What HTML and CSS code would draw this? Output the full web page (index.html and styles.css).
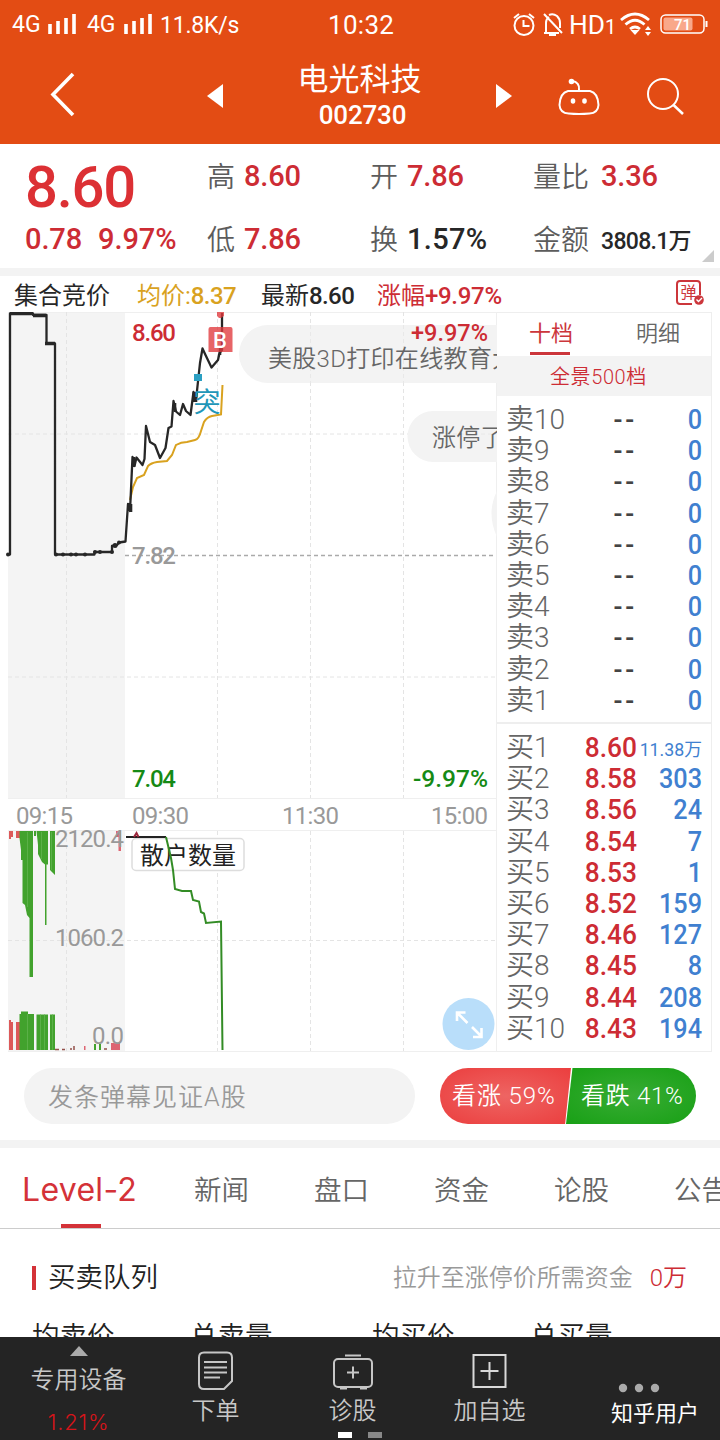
FILE: index.html
```html
<!DOCTYPE html>
<html lang="zh-CN">
<head>
<meta charset="utf-8">
<title>电光科技 002730</title>
<link rel="stylesheet" href="styles.css">
</head>
<body>
<header class="top">
  <div class="status">
    <span class="net">4G</span>
    <svg class="bars" width="30" height="20"><path d="M2 10v10M10 7v13M18 4v16M26 0v20" stroke="#fff" stroke-width="3.6"/></svg>
    <span class="net second">4G</span>
    <svg class="bars" width="30" height="20"><path d="M2 10v10M10 7v13M18 4v16M26 0v20" stroke="#fff" stroke-width="3.6"/></svg>
    <span class="speed">11.8K/s</span>
    <span class="clock">10:32</span>
    <svg class="sysicons" width="200" height="30" viewBox="510 10 200 30" fill="none" stroke="#fff" stroke-width="2">
      <circle cx="524" cy="25.500" r="9.500"/><path d="M523.500 20v6h6M514 18l5-4M534 18l-5-4"/>
      <path d="M546 33v-10a7 7 0 0 1 3-6M549 15q4-2 8 1q3 3 3 7v5M544 33h15M544 14l18 19"/><path d="M549 34.500h7" stroke-width="3"/>
      <text x="569" y="34" class="hd" textLength="36" lengthAdjust="spacingAndGlyphs">HD</text><text x="605" y="34" class="hd one">1</text>
      <path d="M621 20q14-12 28 0M625.500 24.500q9.500-8.500 19 0M630 29q5-4 10 0" stroke-width="2.800"/><path d="M630.500 30h9l-4.500 5z" fill="#fff" stroke="none"/>
      <path d="M645 30h6l-3-4zM645 32h6l-3 4z" fill="#fff" stroke="none"/>
      <rect x="661" y="15" width="43" height="18" rx="4.500" stroke-width="1.500"/><path d="M706.500 21v6" stroke-width="2"/>
      <rect x="663.500" y="17.500" width="29" height="13" rx="2" fill="#f9a88a" stroke="none"/>
      <text x="674" y="29.500" class="bat">71</text>
    </svg>
  </div>
  <nav class="titlebar">
    <svg class="back" width="30" height="46" fill="none" stroke="#fff" stroke-width="3.600"><path d="M24 3L4 23.500L24 44"/></svg>
    <svg class="prev" width="16" height="24"><path d="M16 0v24L0 12z" fill="#fff"/></svg>
    <div class="name"><b>电光科技</b><span>002730</span></div>
    <svg class="next" width="16" height="24"><path d="M0 0v24L16 12z" fill="#fff"/></svg>
    <svg class="robot" width="42" height="38" fill="none" stroke="#fff" stroke-width="2"><path d="M10 13h22q8 2 8.500 14q-.5 8-9 8.500q-10.500 1-21 0q-8.500-.5-9-8.500q.5-12 8.500-14zM21 12q1-8-7-9"/><g fill="#fff" stroke="none"><circle cx="13.500" cy="3.500" r="2.800"/><ellipse cx="15" cy="23" rx="2.300" ry="2.800"/><ellipse cx="26.500" cy="23" rx="2.300" ry="2.800"/></g></svg>
    <svg class="search" width="40" height="40" fill="none" stroke="#fff"><circle cx="17" cy="17" r="15" stroke-width="2"/><path d="M27.500 28L37 37" stroke-width="2.500"/></svg>
  </nav>
</header>

<section class="quote">
  <div class="price"><strong>8.60</strong><span><i>0.78</i><i>9.97%</i></span></div>
  <div class="col c1"><p>高<b>8.60</b></p><p>低<b>7.86</b></p></div>
  <div class="col c2"><p>开<b>7.86</b></p><p>换<b class="dark">1.57%</b></p></div>
  <div class="col c3"><p>量比<b>3.36</b></p><p>金额<b class="dark small">3808.1万</b></p></div>
  <svg class="corner" width="12" height="12"><path d="M12 0v12H0z" fill="#ccc"/></svg>
</section>

<div class="info">
  <span class="i1">集合竞价</span><span class="i2">均价:<b>8.37</b></span><span class="i3">最新<b>8.60</b></span><span class="i4">涨幅<b>+9.97%</b></span>
  <svg class="danmu" width="30" height="28" viewBox="676 281 30 28" fill="none" stroke="#cc363b" stroke-width="2"><path d="M700 296V285q0-3-3-3H680q-3 0-3 3v17q0 3 3 3h12"/><text x="680.500" y="299" class="dm">弹</text><circle cx="699" cy="301" r="4.800" fill="#cc363b" stroke="none"/><path d="M696.500 300.500l2 2l3.500-3.500" stroke="#fff" stroke-width="1.400"/></svg>
</div>

<main class="board">
  <svg class="chart" width="497" height="740" viewBox="0 312 497 740" fill="none">
    <path d="M8 312h117v486H8zM8 831h117v220H8z" fill="#f4f4f4"/>
    <path d="M8 312.500H496M8 798.500H496M8 830.500H496M8 1051.500H497M496.500 312V1052" stroke="#efefef"/>
    <path d="M66.500 312V798M217.500 312V798M310.500 312V798M403.500 312V798M8 434H496M8 677H496M66.500 831V1051M217.500 831V1051M310.500 831V1051M403.500 831V1051M8 940.500H496" stroke="#e4e4e4" stroke-dasharray="4 3"/>
    <g fill="#f3f3f3"><path d="M497 325H268a29 29 0 0 0 0 58h229zM497 411H433a25.500 25.500 0 0 0 0 51h64zM497 491q-11 22 0 46z"/></g>
    <path d="M310.500 325v58M403.500 325v58M432 434h64" stroke="#e8e8e8" stroke-dasharray="4 3"/>
    <g class="bubble"><text x="268" y="367">美股3D打印在线教育大</text><text x="432" y="446">涨停了</text></g>
    <path d="M125 555.500H496" stroke="#aaa" stroke-width="1.500" stroke-dasharray="4 3"/>
    <path d="M130 500L133 487L137 478L144 475L148 466Q151 463 157 462L167 461L172 455L176 445Q181 442 187 442L195 440Q199 439 201 431L204 422Q207 417 212 416L221 414.500L222.500 385" stroke="#d9a21f" stroke-width="2"/>
    <path d="M7 554.500H10V313.500H33V315H46.500V343.500H55V554.500H94.500V552H112V546L117 545L119 542.500L125.500 541.500L128 504L130 511L132.500 457L134.500 466L136.500 457.500L142.500 465L144.500 459L146 426L150 442L155 445L160 458L165.500 448L168.500 428L171.500 426.500L173.500 401L176 411.500L180 415L183 404L186 411L190.500 415L193.500 392L196 400L200 363L202.500 348.500L205.500 355L211.500 367.500L218 360L219.500 353L222 350V313" stroke="#272727" stroke-width="2.300" stroke-linejoin="round"/>
    <path d="M10 313.500H33M33 315.500H46M45 343.500H55" stroke="#272727" stroke-width="3.500"/>
    <path d="M129 503V511M131 504V512M134 457V467M194 392V402M196 392V402M220 355V346M175 403V412" stroke="#272727" stroke-width="2.600"/>
    <g fill="#272727"><circle cx="8" cy="554.500" r="2"/><circle cx="56" cy="554.500" r="2"/><circle cx="63" cy="554.500" r="2"/><circle cx="71" cy="554.500" r="2"/><circle cx="76" cy="554.500" r="2"/><circle cx="85" cy="554.500" r="2"/><circle cx="95" cy="552" r="2"/><circle cx="100" cy="552" r="2"/><circle cx="112" cy="552" r="2"/><circle cx="115" cy="545.500" r="2.500"/><circle cx="119" cy="542.500" r="2"/></g>
    <path d="M194 374h8v7h-8z" fill="#2b9fc2"/><text x="193.500" y="412" class="tu">突</text>
    <path d="M208.500 329q0-2 2-2h20q2 0 2 2v23h-24zM217 312h7v4l-3 2h-2l-2-2z" fill="#e0393c" fill-opacity=".78"/><text x="213" y="348" class="mark">B</text>
    <g class="n">
      <text x="132" y="341" fill="#cd2c34" textLength="44">8.60</text><text x="411" y="341" fill="#cd2c34" textLength="77" lengthAdjust="spacingAndGlyphs">+9.97%</text>
      <text x="132" y="564" fill="#999" textLength="44">7.82</text>
      <text x="132" y="787" fill="#158a15" textLength="44">7.04</text><text x="413" y="787" fill="#158a15" textLength="75" lengthAdjust="spacingAndGlyphs">-9.97%</text>
      <g class="r" fill="#999"><text x="16" y="824" textLength="57">09:15</text><text x="132" y="824" textLength="57">09:30</text><text x="282" y="824" textLength="57">11:30</text><text x="431" y="824" textLength="57">15:00</text></g>
    </g>
    <path d="M9 831h4v6h-2v2h-2zM16 831h4v7h-4z" fill="#dc5959"/>
    <path d="M19.500 831H33V977H29.500V918L27 915L25 905L22.500 903V860H21V850L19.500 838zM34 831h2v5h-2zM36.500 831H48V864.500H46.500V925H45V864.500L42 862L38 854V845zM50 831H55V875L50 870z" fill="#42a22d"/>
    <path d="M9 1020h2v2h2v28h-4zM16 1022h4v28h-4z" fill="#dc5959"/><path d="M19.500 1014h1.500v-2.500h7v2.500H34v36H19.500zM36.500 1014.500H48V1050H36.500zM50 1014.500H55V1050H50z" fill="#42a22d"/>
    <path d="M27.500 1014v36M40.500 1014v36M44.500 1014v36M52.500 1014v36M27.500 832v75M41.500 832v27M51.500 832v38" stroke="#6dbb5a" stroke-width=".6"/>
    <path d="M116 831h5v20h-2.500v-14h-2.500zM111 1043h9v7h-9zM84 1046h1.500v4H84z" fill="#dd6572"/>
    <path d="M95 1044v6M100 1044v6" stroke="#42a22d" stroke-width="2"/><path d="M55 1049.500h4M62 1049.500h3M70 1049h2M74 1046v4M104 1049h3" stroke="#93504a" stroke-width="1.500"/>
    <g class="n r" fill="#999"><text x="55" y="847" textLength="69">2120.4</text><text x="55" y="946" textLength="69">1060.2</text><text x="92" y="1044" textLength="32">0.0</text></g>
    <rect x="132" y="838.500" width="112" height="32" rx="4" fill="#fff" stroke="#ddd" stroke-width="1.500"/><text x="140" y="864" class="legend" textLength="96">散户数量</text>
    <path d="M126 837H166" stroke="#222" stroke-width="2"/><path d="M134 837l2.500-4l2 4" stroke="#9d263b" stroke-width="2"/>
    <path d="M166 837L171 858L173 870L175 889L182 891H191L193 900L199 901.500L201 912L204 913.500L206 923L221 921.500L222.500 1050" stroke="#338c25" stroke-width="2"/>
    <circle cx="468.500" cy="1024" r="26" fill="#b9defa"/><path d="M467.500 1023L457 1012.500M457 1021v-8.500h8.500M472 1027L481.500 1036.500M481.500 1028v9H473" stroke="#fff" stroke-width="2.600"/>
  </svg>
  <aside class="book">
    <div class="btabs"><span class="on">十档</span><span>明细</span></div>
    <div class="all">全景500档</div>
    <div class="rows sell">
      <p><span>卖10</span><b>--</b><i>0</i></p><p><span>卖9</span><b>--</b><i>0</i></p><p><span>卖8</span><b>--</b><i>0</i></p><p><span>卖7</span><b>--</b><i>0</i></p><p><span>卖6</span><b>--</b><i>0</i></p><p><span>卖5</span><b>--</b><i>0</i></p><p><span>卖4</span><b>--</b><i>0</i></p><p><span>卖3</span><b>--</b><i>0</i></p><p><span>卖2</span><b>--</b><i>0</i></p><p><span>卖1</span><b>--</b><i>0</i></p>
    </div>
    <div class="rows buy">
      <p><span>买1</span><b>8.60</b><i class="wan">11.38万</i></p><p><span>买2</span><b>8.58</b><i>303</i></p><p><span>买3</span><b>8.56</b><i>24</i></p><p><span>买4</span><b>8.54</b><i>7</i></p><p><span>买5</span><b>8.53</b><i>1</i></p><p><span>买6</span><b>8.52</b><i>159</i></p><p><span>买7</span><b>8.46</b><i>127</i></p><p><span>买8</span><b>8.45</b><i>8</i></p><p><span>买9</span><b>8.44</b><i>208</i></p><p><span>买10</span><b>8.43</b><i>194</i></p>
    </div>
  </aside>
</main>

<div class="vote">
  <div class="field">发条弹幕见证A股</div>
  <div class="votes"><span class="up">看涨 59%</span><span class="down">看跌 41%</span></div>
</div>

<nav class="tabs"><span class="on">Level-2</span><span>新闻</span><span>盘口</span><span>资金</span><span>论股</span><span>公告</span></nav>

<section class="queue">
  <div class="qhead"><h2>买卖队列</h2><p>拉升至涨停价所需资金<em>0万</em></p></div>
  <div class="qcols"><span>均卖价</span><span>总卖量</span><span>均买价</span><span>总买量</span></div>
</section>

<footer class="dock">
  <div class="item dev"><svg width="18" height="10"><path d="M9 0l9 10H0z" fill="#aaa"/></svg><span>专用设备</span><em>1.21%</em></div>
  <div class="item"><svg width="36" height="40" fill="none" stroke="#c6c6c6" stroke-width="2"><path d="M6 1.500H29q5 0 5 5V30l-8 8H6q-5 0-5-5V6.500q0-5 5-5z"/><path d="M6 11h23M6 16.500h23M6 21.500h23M6 26.500h16"/></svg><span>下单</span></div>
  <div class="item"><svg width="42" height="40" fill="none" stroke="#c6c6c6" stroke-width="2"><rect x="2" y="8" width="38" height="28" rx="4"/><path d="M13 4.500h16M15 21.500h12M21 15.500v12"/><path d="M8 37h7M28 37h7" stroke-width="3"/></svg><span>诊股</span></div>
  <div class="item"><svg width="36" height="40" fill="none" stroke="#d8d8d8" stroke-width="2"><path d="M1.500 4h32v32h-32zM17.500 11v18M8.500 20h18"/></svg><span>加自选</span></div>
  <div class="item more"><svg width="42" height="10" fill="#aaa"><circle cx="5" cy="5" r="4.200"/><circle cx="21" cy="5" r="4.200"/><circle cx="37" cy="5" r="4.200"/></svg><span>知乎用户</span></div>
  <div class="pager"><i></i><i></i></div>
</footer>
</body>
</html>
```
FILE: styles.css
```css
* { box-sizing: border-box; }
body { margin: 0; width: 720px; height: 1440px; overflow: hidden; display: flex; flex-direction: column; background: #fff; color: #666; font-family: Roboto, "Noto Sans CJK SC", sans-serif; font-weight: 350; }
p, h2 { margin: 0; font-weight: 350; }
b { font-weight: 500; }
i, em { font-style: normal; }
svg { display: block; flex: none; }
span { white-space: nowrap; }

.top { flex: none; height: 144px; background: #e34c14; color: #fff; }
.status { height: 50px; display: flex; align-items: center; padding-left: 12px; font-weight: 400; }
.net { width: 36px; font-size: 23px; line-height: 54px; }
.net.second { width: 37px; margin-left: 9px; letter-spacing: -.2px; }
.bars { margin-top: -2px; }
.speed { width: 168px; margin-left: 6px; font-size: 23px; letter-spacing: -.2px; }
.clock { width: 182px; font-size: 26px; line-height: 52px; letter-spacing: .3px; }
.hd { font: 400 26px Roboto; fill: #fff; stroke: none; }
.hd.one { font-size: 20px; }
.bat { font: 500 15px Roboto; fill: #fff; stroke: none; }
.titlebar { height: 94px; display: flex; align-items: flex-start; padding-left: 49px; }
.back { margin-top: 21px; }
.prev { margin: 34px 0 0 128px; }
.name { width: 273px; display: flex; flex-direction: column; align-items: center; font-size: 31px; line-height: 60px; }
.name b { height: 50px; font-weight: 400; }
.name span { margin-left: 6px; font-size: 26px; line-height: 31px; font-weight: 500; letter-spacing: -.2px; }
.next { margin-top: 34px; }
.robot { margin: 28px 0 0 46px; }
.search { margin: 27px 0 0 46px; }

.quote { position: relative; flex: none; height: 132px; padding: 9px 0 0 25px; display: flex; border-bottom: 8px solid #f3f3f3; color: #cd2c34; }
.price { width: 182px; margin-top: -1px; }
.price strong { display: block; height: 63px; line-height: 70px; font-size: 58px; font-weight: 500; color: #dc3034; letter-spacing: -1.300px; }
.price span { display: flex; gap: 16px; font-size: 29px; line-height: 48px; font-weight: 500; letter-spacing: -.1px; }
.col { font-size: 28px; line-height: 49px; color: #5c5c5c; }
.col p { height: 63px; display: flex; gap: 9px; white-space: nowrap; }
.col b { font-size: 29px; line-height: 46px; color: #cd2c34; letter-spacing: -.2px; }
.col .dark { color: #272727; letter-spacing: .3px; }
.col .small { font-size: 23px; line-height: 52px; letter-spacing: -.7px; }
.c1, .c2 { width: 163px; }
.c3 p { gap: 12px; }
.corner { position: absolute; right: 6px; bottom: 6px; }

.info { flex: none; height: 36px; display: flex; padding-left: 14px; font-size: 24px; line-height: 40px; color: #272727; font-weight: 400; }
.info b { letter-spacing: -.6px; }
.i1 { width: 123px; } .i2 { width: 124px; color: #d9a21f; } .i3 { width: 116px; } .i4 { width: 299px; color: #cd2c34; }
.i4 b { letter-spacing: -.3px; }
.danmu { margin-top: 4px; }
.dm { font: 400 16px "Noto Sans CJK SC"; fill: #cc363b; stroke: none; }

.board { flex: none; height: 740px; display: flex; }
.chart { font-family: Roboto, "Noto Sans CJK SC", sans-serif; }
.bubble { font-size: 24px; font-weight: 350; fill: #666; letter-spacing: .3px; }
.n { font-size: 24px; font-weight: 500; }
.r { font-weight: 400; }
.legend { font-size: 24px; fill: #222; font-weight: 400; }
.tu { font-size: 27px; font-weight: 400; fill: #2196b8; }
.mark { font-size: 22px; fill: #fff; font-weight: 500; }
.book { width: 215px; border-right: 1px solid #eee; border-top: 1px solid #eee; border-bottom: 1px solid #eee; }
.btabs { height: 43px; display: flex; gap: 66px; padding-left: 33px; font-size: 22px; line-height: 42px; font-weight: 350; }
.btabs .on { height: 42px; width: 40px; color: #cc363b; border-bottom: 3px solid #cc363b; text-indent: -1px; font-weight: 400; }
.all { height: 40px; padding-left: 53px; background: #f3f3f3; color: #cd2c34; font-size: 20px; line-height: 42px; letter-spacing: .6px; }
.rows { height: 328px; padding: 8px 9px 0; }
.sell { border-bottom: 2px solid #eee; }
.rows p { height: 31.200px; line-height: 32px; display: grid; grid-template-columns: 75px 56px 1fr; font-size: 28px; }
.rows b { text-align: right; color: #cd2c34; font-size: 28px; transform: scaleX(.94); transform-origin: right; }
.sell b { color: #444; letter-spacing: 3px; font-weight: 500; text-indent: 3px; }
.rows i { text-align: right; color: #4080d0; font-weight: 500; white-space: nowrap; transform: scaleX(.9); transform-origin: right; }
.rows .wan { font-size: 18.500px; line-height: 36px; font-weight: 400; margin-left: -8px; transform: scaleX(.96); }

.vote { flex: none; height: 96px; padding: 16px 24px 0; display: flex; justify-content: space-between; border-bottom: 8px solid #f3f3f3; }
.field { width: 391px; height: 56px; padding-left: 24px; border-radius: 28px; background: #f3f3f3; color: #999; font-size: 25px; line-height: 60px; letter-spacing: 1px; }
.votes { width: 256px; height: 56px; display: flex; border-radius: 28px; overflow: hidden; color: #fff; font-size: 24px; line-height: 57px; letter-spacing: .9px; }
.votes span { padding-left: 12px; width: 131px; background: radial-gradient(#ee6563, #eb3e3e); clip-path: polygon(0 0, 100% 0, 95.500% 100%, 0 100%); }
.votes .down { width: 133px; margin-left: -5px; padding-left: 15px; letter-spacing: .7px; background: radial-gradient(#38ac34, #18a015); clip-path: polygon(5% 0, 100% 0, 100% 100%, 0 100%); flex: 1; }

.tabs { flex: none; height: 81px; display: flex; border-bottom: 1px solid #ccc; font-size: 27.500px; line-height: 86px; padding-left: 22px; overflow: hidden; }
.tabs span { width: 120px; flex: none; }
.tabs .on { position: relative; width: 172px; color: #d43238; font-family: Inter, Roboto, sans-serif; font-size: 32px; font-weight: 400; line-height: 84px; letter-spacing: .3px; }
.tabs .on::after { content: ""; position: absolute; left: 39px; top: 76px; width: 40px; height: 4px; background: #d43238; }

.queue { flex: 1; min-height: 0; overflow: hidden; }
.qhead { height: 84px; display: flex; justify-content: space-between; padding: 34px 33px 0 32px; }
h2 { height: 30px; line-height: 30px; font-size: 27.500px; color: #222; display: flex; align-items: center; gap: 12px; }
h2::before { content: ""; width: 4px; height: 24px; background: #d43238; }
.qhead p { color: #999; font-size: 24px; line-height: 30px; }
.qhead em { color: #cd2c34; margin-left: 17px; font-size: 24px; }
.qcols { display: flex; padding-left: 32px; font-size: 27.500px; line-height: 48px; color: #222; }
.qcols span:nth-child(1) { width: 158px; } .qcols span:nth-child(2) { width: 182px; } .qcols span:nth-child(3) { width: 158px; }

.dock { position: relative; flex: none; height: 103px; display: flex; background: #242424; color: #c8c8c8; padding-left: 10px; }
.item { flex: none; width: 137px; display: flex; flex-direction: column; align-items: center; padding-top: 14px; font-size: 24px; }
.item span { line-height: 41px; }
.item.dev { padding-top: 9px; }
.dev span { line-height: 49px; }
.dev em { color: #d5141a; font-size: 23px; line-height: 34px; letter-spacing: .8px; font-family: Inter, sans-serif; font-weight: 300; font-size: 22px; }
.item.more { padding-top: 46px; width: 162px; }
.more span { color: #fff; font-size: 22px; font-weight: 400; margin-left: 32px; }
.pager { position: absolute; left: 338px; bottom: 2px; display: flex; gap: 16px; }
.pager i { width: 14px; height: 6px; background: #fff; }
.pager i + i { background: #888; }
```
